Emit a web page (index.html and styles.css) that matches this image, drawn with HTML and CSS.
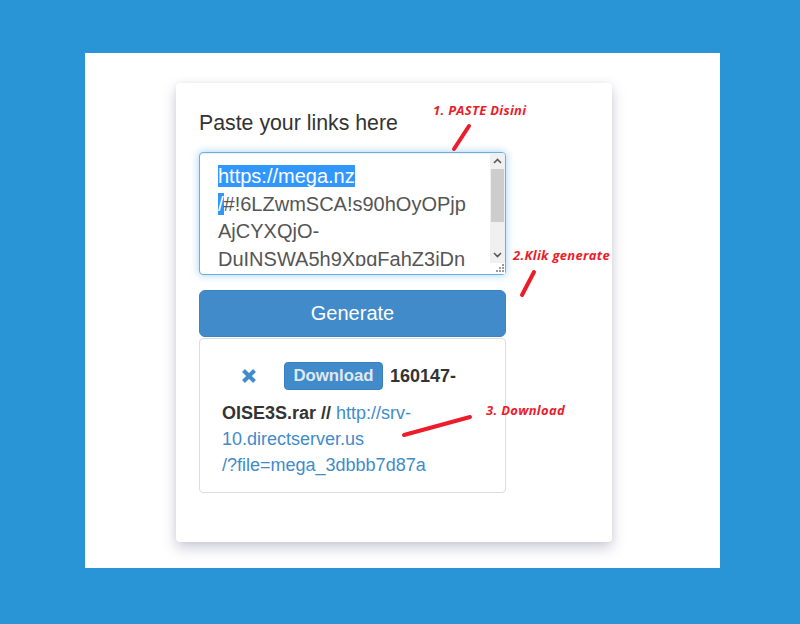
FILE: index.html
```html
<!DOCTYPE html>
<html lang="en">
<head>
<meta charset="utf-8">
<title>Paste your links here</title>
<link rel="stylesheet" href="styles.css">
</head>
<body>
<div class="stage">
  <div class="frame">
    <div class="card">
      <div class="col">
        <h3 class="title">Paste your links here</h3>
        <div class="textarea">
          <div class="ta-text">
            <div class="ta-line"><span class="sel">https://mega.nz</span></div>
            <div class="ta-line"><span class="sel">/</span>#!6LZwmSCA!s90hOyOPjp</div>
            <div class="ta-line">AjCYXQjO-</div>
            <div class="ta-line">DuINSWA5h9XpgFahZ3iDn</div>
          </div>
          <div class="scrollbar">
            <div class="sb-arrow">
              <svg width="9" height="6" viewBox="0 0 9 6"><path d="M1 5 L4.5 1.5 L8 5" fill="none" stroke="#5a5a5a" stroke-width="1.6"/></svg>
            </div>
            <div class="sb-thumb"></div>
            <div class="sb-track"></div>
            <div class="sb-arrow">
              <svg width="9" height="6" viewBox="0 0 9 6"><path d="M1 1 L4.5 4.5 L8 1" fill="none" stroke="#5a5a5a" stroke-width="1.6"/></svg>
            </div>
            <div class="sb-resizer">
              <svg width="11" height="11" viewBox="0 0 11 11" fill="#9a9a9a">
                <rect x="8" y="1" width="2" height="2"/>
                <rect x="5" y="4" width="2" height="2"/><rect x="8" y="4" width="2" height="2"/>
                <rect x="2" y="7" width="2" height="2"/><rect x="5" y="7" width="2" height="2"/><rect x="8" y="7" width="2" height="2"/>
              </svg>
            </div>
          </div>
        </div>
        <button class="generate">Generate</button>
        <div class="result">
          <div class="r-head">
            <svg class="x-icon" width="16" height="14" viewBox="0 0 16 14"><path d="M2.5 1.5 L13.5 12.5 M13.5 1.5 L2.5 12.5" stroke="#428bca" stroke-width="4"/></svg>
            <span class="dl-btn">Download</span>
            <b class="fname">160147-</b>
          </div>
          <div class="r-line"><b class="fname">OISE3S.rar //</b> <a class="link" href="#">http://srv-</a></div>
          <div class="r-line"><a class="link" href="#">10.directserver.us</a></div>
          <div class="r-line"><a class="link" href="#">/?file=mega_3dbbb7d87a</a></div>
        </div>
      </div>
    </div>

    <div class="note n1">1. PASTE Disini</div>
    <div class="note n2">2.Klik generate</div>
    <div class="note n3">3. Download</div>
    <svg class="marks" width="635" height="515" viewBox="0 0 635 515">
      <g stroke="#ec1c2a" stroke-width="4" stroke-linecap="round">
        <line x1="384" y1="73" x2="369" y2="96"/>
        <line x1="449" y1="219" x2="437" y2="242"/>
        <line x1="385" y1="364" x2="319" y2="382"/>
      </g>
    </svg>
  </div>
</div>
</body>
</html>
```

FILE: styles.css
```css
html, body {
  margin: 0;
  padding: 0;
}
body {
  background: #2994d6;
  font-family: "Liberation Sans", Arial, sans-serif;
  color: #333;
}
.stage {
  width: 800px;
  height: 624px;
  box-sizing: border-box;
  padding: 53px 80px 56px 85px;
}
.frame {
  position: relative;
  width: 635px;
  height: 515px;
  background: #fff;
  box-sizing: border-box;
  padding: 30px 0 0 91px;
}
.card {
  width: 436px;
  box-sizing: border-box;
  background: #fff;
  border-radius: 4px;
  padding: 28px 23px 49px 23px;
  box-shadow: 0 6px 14px rgba(60, 60, 110, 0.26), 0 0 6px rgba(0, 0, 0, 0.05);
}
.col {
  width: 307px;
  display: flex;
  flex-direction: column;
}
.title {
  margin: 0 0 17px 0;
  font-size: 21.3px;
  line-height: 24px;
  font-weight: normal;
  color: #333;
}
.textarea {
  height: 123px;
  box-sizing: border-box;
  border: 1px solid #66afe9;
  border-radius: 4px;
  box-shadow: inset 0 1px 1px rgba(0, 0, 0, 0.075), 0 0 8px rgba(102, 175, 233, 0.6);
  display: flex;
  background: #fff;
}
.ta-text {
  flex: 1;
  height: 113px;
  overflow: hidden;
  box-sizing: border-box;
  padding: 10px 0 0 18px;
  font-size: 20px;
  line-height: 27.5px;
  color: #555;
  white-space: nowrap;
}
.sel {
  background: #3297fd;
  color: #fff;
}
.scrollbar {
  width: 15px;
  display: flex;
  flex-direction: column;
  background: #f0f0f0;
  border-top-right-radius: 3px;
  border-bottom-right-radius: 3px;
}
.sb-arrow {
  height: 16px;
  display: flex;
  align-items: center;
  justify-content: center;
}
.sb-thumb {
  height: 53px;
  margin: 0 1px;
  background: #cdcdcd;
}
.sb-track {
  flex: 1;
}
.sb-resizer {
  height: 11px;
  background: #fff;
  display: flex;
  align-items: flex-end;
  justify-content: flex-end;
}
.sb-resizer svg {
  display: block;
}
.generate {
  margin-top: 15px;
  height: 47px;
  width: 100%;
  border: 1px solid #3a84c4;
  border-radius: 6px;
  background: #428bca;
  color: #fff;
  font-family: "Liberation Sans", Arial, sans-serif;
  font-size: 20px;
  padding: 0;
}
.result {
  margin-top: 1px;
  height: 155px;
  box-sizing: border-box;
  border: 1px solid #dddddd;
  border-radius: 4px;
  padding: 21px 22px 14px 22px;
  font-size: 18px;
}
.r-head {
  height: 32px;
  margin-bottom: 8px;
  display: flex;
  align-items: center;
}
.x-icon {
  display: block;
  margin-left: 19px;
  margin-right: 27px;
}
.dl-btn {
  display: flex;
  align-items: center;
  justify-content: center;
  width: 99px;
  height: 28px;
  box-sizing: border-box;
  background: #428bca;
  border: 1px solid #3a7fbf;
  border-radius: 4px;
  color: #dfe8f2;
  font-weight: bold;
  font-size: 16.8px;
  margin-right: 7px;
}
.fname {
  font-weight: bold;
  color: #333;
}
.r-line {
  line-height: 26px;
  white-space: nowrap;
}
.link {
  color: #428bca;
  text-decoration: none;
}
.note {
  position: absolute;
  font-family: "Open Sans", "DejaVu Sans", sans-serif;
  font-weight: bold;
  font-style: italic;
  font-size: 13px;
  letter-spacing: 0.3px;
  line-height: 13px;
  color: #ec1c2a;
  white-space: nowrap;
}
.n1 { left: 348px; top: 51px; }
.n2 { left: 428px; top: 196px; }
.n3 { left: 401px; top: 351px; }
.marks {
  position: absolute;
  left: 0;
  top: 0;
  pointer-events: none;
}
```
